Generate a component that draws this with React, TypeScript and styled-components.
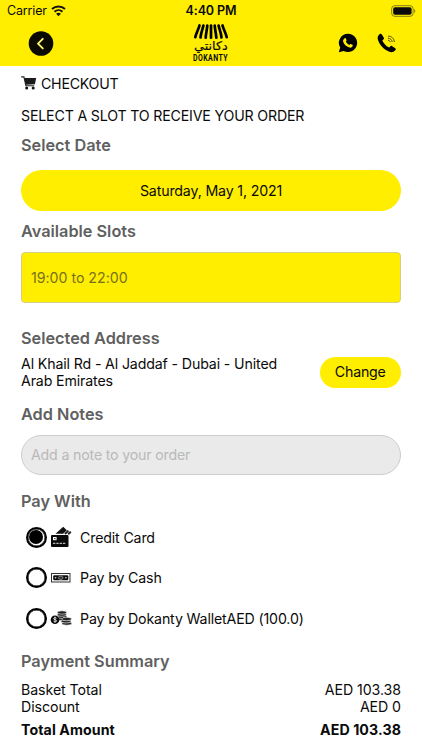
import React from "react";
import styled, { createGlobalStyle } from "styled-components";

const YELLOW = "#ffee00";

const GlobalStyle = createGlobalStyle`
  * { box-sizing: border-box; }
  html, body { margin: 0; background: #fff; }
  body { font-family: Inter, "Noto Sans", sans-serif; color: #0a0a0a; }
`;

const Screen = styled.div`
  width: 422px;
  height: 750px;
  overflow: hidden;
  background: #fff;
`;

const Header = styled.header`
  height: 65.5px;
  background: ${YELLOW};
`;

const StatusBar = styled.div`
  height: 22px;
  padding: 0 7px;
  display: grid;
  grid-template-columns: 1fr auto 1fr;
  align-items: center;
`;

const Carrier = styled.div`
  display: flex;
  align-items: center;
  gap: 4px;
  font-size: 12.5px;
  letter-spacing: -0.15px;
  line-height: 22px;
`;

const Clock = styled.div`
  font-size: 12.5px;
  font-weight: 600;
  letter-spacing: -0.1px;
  line-height: 22px;
`;

const BatterySlot = styled.div`
  display: flex;
  justify-content: flex-end;
  margin-right: -1px;
  padding-bottom: 1px;
`;

const NavBar = styled.nav`
  height: 43px;
  padding: 0 25px 0 28px;
  display: grid;
  grid-template-columns: 1fr 40px 1fr;
  align-items: center;
`;

const IconButton = styled.button`
  display: flex;
  padding: 0;
  border: 0;
  background: none;
  color: #000;
`;

const Contacts = styled.div`
  display: flex;
  justify-content: flex-end;
  align-items: center;
  gap: 19px;
  padding-bottom: 1px;
`;

const Logo = styled.div`
  width: 40px;
  height: 42px;
  margin-left: -1.5px;
  display: flex;
  flex-direction: column;
  align-items: center;
`;

const LogoArabic = styled.span`
  font-family: "DejaVu Sans", sans-serif;
  font-size: 12px;
  line-height: 13px;
  height: 14px;
  white-space: nowrap;
  transform: scaleX(1.06);
  -webkit-text-stroke: 0.2px #0a0a0a;
`;

const LogoLatin = styled.span`
  font-family: "Roboto", sans-serif;
  font-size: 8.2px;
  font-weight: 700;
  line-height: 9px;
  letter-spacing: 0.5px;
  transform: scaleX(0.85);
`;

const Main = styled.main`
  padding: 7.5px 21px 0;
  display: flex;
  flex-direction: column;
`;

const PageTitle = styled.h1`
  margin: 0;
  height: 20px;
  display: flex;
  align-items: center;
  gap: 4px;
  font-size: 14.2px;
  font-weight: 400;
  letter-spacing: -0.25px;
  line-height: 21px;
`;

const Instruction = styled.p`
  margin: 13px 0 9px;
  font-size: 14.2px;
  letter-spacing: -0.18px;
  line-height: 20px;
  white-space: nowrap;
`;

const SectionTitle = styled.h2`
  margin: 0;
  font-size: 16.3px;
  font-weight: 600;
  letter-spacing: 0;
  line-height: 20px;
  color: #606060;
`;

const DateButton = styled.button`
  height: 41px;
  margin: 15px 0 10px;
  padding: 0;
  border: 0;
  border-radius: 21px;
  background: ${YELLOW};
  color: #0a0a0a;
  font: 400 14.2px/41px Inter, sans-serif;
  letter-spacing: -0.16px;
`;

const Slot = styled.div`
  height: 51px;
  margin: 11px 0 25px;
  padding: 0 9px;
  border: 1px solid #d3cf86;
  border-radius: 4px;
  background: ${YELLOW};
  color: #77701b;
  font-size: 14.2px;
  letter-spacing: -0.02px;
  line-height: 49px;
`;

const AddressRow = styled.div`
  height: 34px;
  margin: 7px 0 15px;
  display: flex;
  justify-content: space-between;
  align-items: center;
`;

const Address = styled.p`
  margin: 0;
  width: 270px;
  font-size: 14.2px;
  letter-spacing: -0.14px;
  line-height: 17px;
  padding-bottom: 1px;
`;

const ChangeButton = styled.button`
  width: 81.5px;
  height: 31px;
  padding: 0;
  border: 0;
  border-radius: 16px;
  background: ${YELLOW};
  color: #0a0a0a;
  font: 400 14.2px/30px Inter, sans-serif;
  letter-spacing: -0.2px;
`;

const NoteInput = styled.input`
  height: 40.5px;
  margin: 10.5px 0 16px;
  padding: 0 9px;
  border: 1px solid #cdcdcd;
  border-radius: 21px;
  outline: 0;
  background: #eaeaea;
  font: 400 14.2px/38px Inter, sans-serif;
  letter-spacing: -0.18px;
  &::placeholder { color: #b9b9b9; opacity: 1; }
`;

const Methods = styled.div`
  margin: 6px 0 12px;
`;

const Method = styled.div`
  height: 40.6px;
  padding-left: 4.5px;
  display: flex;
  align-items: center;
  font-size: 14.2px;
  letter-spacing: -0.16px;
`;

const Radio = styled.span<{ $checked?: boolean }>`
  width: 21px;
  height: 21px;
  flex: none;
  display: flex;
  align-items: center;
  justify-content: center;
  border: 2.5px solid #000;
  border-radius: 50%;
  box-shadow: inset 0 0 0 0.5px #000;

  &::after {
    content: "";
    width: 14px;
    height: 14px;
    flex: none;
    border-radius: 50%;
    background: ${(p) => (p.$checked ? "#000" : "transparent")};
  }
`;

const MethodIcon = styled.span`
  width: 22px;
  margin: 0 8px 0 3.5px;
  display: flex;
`;

const Summary = styled.div`
  margin-top: 10px;
  display: flex;
  flex-direction: column;
`;

const SummaryRow = styled.div<{ $total?: boolean }>`
  display: flex;
  justify-content: space-between;
  margin-top: ${(p) => (p.$total ? "5px" : "0")};
  font-size: 14.2px;
  font-weight: ${(p) => (p.$total ? 700 : 400)};
  letter-spacing: ${(p) => (p.$total ? "0.08px" : "-0.08px")};
  line-height: ${(p) => (p.$total ? "20px" : "17px")};
`;

const WifiIcon = () => (
  <svg width="15" height="12" viewBox="0 0 15 12" fill="none" stroke="#111">
    <path d="M1 4.100C4.700.600 10.300.600 14 4.100" strokeWidth="2" />
    <path d="M3.500 6.700c2.300-2.100 5.700-2.100 8 0" strokeWidth="1.900" />
    <path d="M5.100 8.700c1.400-1.200 3.400-1.200 4.800 0L7.500 11.200z" fill="#111" stroke="none" />
  </svg>
);

const BatteryIcon = () => (
  <svg width="25" height="12" viewBox="0 0 25 12">
    <rect x=".7" y=".7" width="21.4" height="10.6" rx="3" fill="none" stroke="#847c12" strokeWidth="1" />
    <rect x="2.2" y="2.2" width="18.4" height="7.6" rx="1.7" fill="#0a0a0a" />
    <path d="M23.200 4c1.400.400 1.400 3.600 0 4z" fill="#847c12" />
  </svg>
);

const BackIcon = () => (
  <svg width="26" height="26" viewBox="0 0 26 26">
    <circle cx="13" cy="12.500" r="12.300" fill="#0a0a00" />
    <path d="M14.800 7.800 10 12.600l4.800 4.800" fill="none" stroke="#fff36b" strokeWidth="1.900" strokeLinecap="round" strokeLinejoin="round" />
  </svg>
);

const AwningIcon = () => (
  <svg width="36" height="17" viewBox="0 0 36 17" fill="none" stroke="#000" strokeWidth="2.700" strokeLinecap="round">
    <path d="M6.500 2.500C5.400 6.500 3.300 9.500 2.300 14.200M10.400 2.500C9.600 6.500 8 9.500 7.500 14.500M14.300 2.500C14 7 12.900 10 12.700 14.700M18 2.500V14.700M21.700 2.500C22 7 23.100 10 23.300 14.700M25.600 2.500C26.400 6.500 28 9.500 28.500 14.500M29.500 2.500C30.600 6.500 32.700 9.500 33.700 14.200" />
  </svg>
);

const WhatsAppIcon = () => (
  <svg width="20" height="20" viewBox="0 0 20 20">
    <path d="M10 .8a9.100 9.100 0 1 1-4.300 17.100L.8 19.200l1.400-4.600A9.100 9.100 0 0 1 10 .8z" fill="#000" />
    <path d="M6.800 5.200c.6-.3 1 0 1.200.5l.6 1.500c.1.500-.5 1-.8 1.400.7 1.500 1.900 2.700 3.500 3.400.5-.4.9-1.200 1.400-1l1.700.8c.5.300.4.900.2 1.400-.5 1.200-2 1.700-3.200 1.300-3.200-.8-5.500-3-6.300-5.900-.2-1.300.4-2.900 1.700-3.400z" fill={YELLOW} />
  </svg>
);

const PhoneIcon = () => (
  <svg width="20" height="20" viewBox="0 0 20 20">
    <path d="M2.500 1.300c.9-.8 1.800-.6 2.500.4l1.700 2.700c.5.900.3 1.500-.4 2.100-.8.600-1 .9-.6 1.800 1.300 2.500 3.100 4.500 5.500 5.800.9.500 1.200.3 1.800-.4.700-.9 1.300-1.100 2.200-.5l2.700 1.700c1 .7 1.200 1.500.4 2.400-1.600 1.900-3.500 2.500-6 1.500C6.900 16.700 2.900 12.200 1 7.100.2 4.700.7 2.800 2.500 1.300z" fill="#000" />
    <g fill="none" stroke="#4a4500" strokeWidth="1">
      <path d="M11 3.200c3.300-.3 6.200 2.300 6.300 5.800" />
      <path d="M11 5.300c2.200-.1 4 1.500 4.200 3.700" />
      <path d="M11 7.300c1.200 0 2.100.7 2.200 1.800" />
    </g>
  </svg>
);

const CartIcon = () => (
  <svg width="16" height="14" viewBox="0 0 16 14">
    <path d="M.2.9h2.700l2 8.900h8.300" fill="none" stroke="#222" strokeWidth="1.100" />
    <path d="M3.200 2h12L13.900 8.200 4.700 8.800z" fill="#1a1a1a" />
    <circle cx="5.700" cy="12" r="1.500" fill="#111" />
    <circle cx="12.200" cy="12" r="1.500" fill="#111" />
  </svg>
);

const CardIcon = () => (
  <svg width="22" height="22" viewBox="0 0 22 22">
    <path d="M5.500 7.800 13.200.8l3.600 3.400-3.600 3.600z" fill="#111" />
    <path d="m15 8 3.400-3.400M18.200 8.200l2.600-2.400" stroke="#222" strokeWidth="2" fill="none" />
    <rect x="1" y="9" width="17.500" height="12" rx="1" fill="#0a0a0a" />
    <rect x="3" y="11" width="3.600" height="3.200" fill="#fff" />
    <rect x="4.200" y="12" width="1.300" height="1.200" fill="#222" />
    <path d="M3 17.300h12.500" stroke="#ddd" strokeWidth="1" strokeDasharray="2.400 .9" />
  </svg>
);

const CashIcon = () => (
  <svg width="22" height="12" viewBox="0 0 22 12">
    <rect x="1.500" y="1.500" width="18.500" height="8.500" fill="#fff" stroke="#333" strokeWidth="1" />
    <rect x="3.200" y="3.200" width="15.100" height="5.100" rx="1" fill="#111" />
    <ellipse cx="10.700" cy="5.800" rx="2.300" ry="1.700" fill="#333" stroke="#bbb" strokeWidth=".6" />
    <circle cx="5.600" cy="5.800" r=".8" fill="#ddd" />
    <circle cx="15.900" cy="5.800" r=".8" fill="#ddd" />
  </svg>
);

const CoinsIcon = () => (
  <svg width="22" height="16" viewBox="0 0 22 16">
    <g fill="#222" stroke="#fff" strokeWidth=".6">
      <ellipse cx="11.500" cy="9" rx="4.600" ry="1.600" />
      <ellipse cx="12.500" cy="6.900" rx="4.600" ry="1.600" />
      <ellipse cx="11.800" cy="4.700" rx="4.600" ry="1.600" />
      <ellipse cx="12" cy="2.500" rx="4.600" ry="1.700" />
      <ellipse cx="16.800" cy="13.500" rx="4.900" ry="1.700" />
      <ellipse cx="16" cy="11.300" rx="4.900" ry="1.700" />
      <ellipse cx="16.600" cy="9" rx="4.900" ry="1.700" />
    </g>
    <circle cx="5" cy="9.700" r="4.300" fill="#0a0a0a" />
    <path d="M6.500 8.200c-.8-.9-2.900-.7-2.900.4 0 1.400 3 .8 3 2.200 0 1.200-2.200 1.300-3.100.3M5 6.700v6" fill="none" stroke="#fff" strokeWidth=".8" />
  </svg>
);

const METHODS = [
  { label: "Credit Card", icon: <CardIcon />, checked: true },
  { label: "Pay by Cash", icon: <CashIcon />, checked: false },
  { label: "Pay by Dokanty WalletAED (100.0)", icon: <CoinsIcon />, checked: false },
];

export default function App() {
  return (
    <>
      <GlobalStyle />
      <Screen>
        <Header>
          <StatusBar>
            <Carrier>Carrier <WifiIcon /></Carrier>
            <Clock>4:40 PM</Clock>
            <BatterySlot><BatteryIcon /></BatterySlot>
          </StatusBar>
          <NavBar>
            <IconButton aria-label="Back"><BackIcon /></IconButton>
            <Logo>
              <AwningIcon />
              <LogoArabic lang="ar" dir="rtl">دكانتي</LogoArabic>
              <LogoLatin>DOKANTY</LogoLatin>
            </Logo>
            <Contacts>
              <IconButton aria-label="WhatsApp"><WhatsAppIcon /></IconButton>
              <IconButton aria-label="Call"><PhoneIcon /></IconButton>
            </Contacts>
          </NavBar>
        </Header>
        <Main>
          <PageTitle><CartIcon />CHECKOUT</PageTitle>
          <Instruction>SELECT A SLOT TO RECEIVE YOUR ORDER</Instruction>
          <SectionTitle>Select Date</SectionTitle>
          <DateButton>Saturday, May 1, 2021</DateButton>
          <SectionTitle>Available Slots</SectionTitle>
          <Slot>19:00 to 22:00</Slot>
          <SectionTitle>Selected Address</SectionTitle>
          <AddressRow>
            <Address>Al Khail Rd - Al Jaddaf - Dubai - United Arab Emirates</Address>
            <ChangeButton>Change</ChangeButton>
          </AddressRow>
          <SectionTitle>Add Notes</SectionTitle>
          <NoteInput placeholder="Add a note to your order" />
          <SectionTitle>Pay With</SectionTitle>
          <Methods>
            {METHODS.map((m) => (
              <Method key={m.label}>
                <Radio $checked={m.checked} />
                <MethodIcon>{m.icon}</MethodIcon>
                {m.label}
              </Method>
            ))}
          </Methods>
          <SectionTitle>Payment Summary</SectionTitle>
          <Summary>
            <SummaryRow><span>Basket Total</span><span>AED 103.38</span></SummaryRow>
            <SummaryRow><span>Discount</span><span>AED 0</span></SummaryRow>
            <SummaryRow $total><span>Total Amount</span><span>AED 103.38</span></SummaryRow>
          </Summary>
        </Main>
      </Screen>
    </>
  );
}
